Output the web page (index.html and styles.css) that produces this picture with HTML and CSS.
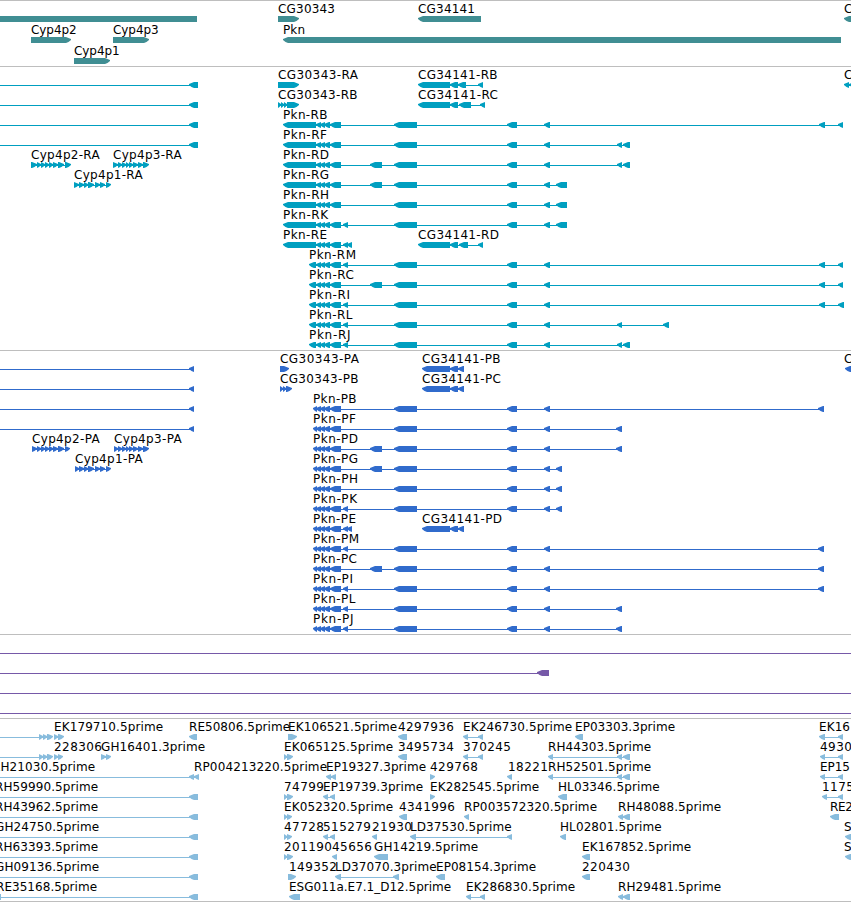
FILE: index.html
```
<!DOCTYPE html>
<html lang="en">

<head>
	<meta charset="utf-8">
	<title>Genome browser tracks</title>
	<link rel="stylesheet" href="styles.css">
</head>

<body>
	<main class="browser">
		<section class="track genes"><svg id="Genes"></svg></section>
		<section class="track transcripts"><svg id="Transcripts"></svg></section>
		<section class="track proteins"><svg id="Proteins"></svg></section>
		<section class="track insertions"><svg id="Insertions"></svg></section>
		<section class="track ests"><svg id="Ests"></svg></section>
	</main>
	<script src="tracks.js"></script>
</body>

</html>
```
FILE: styles.css
```
* {
	box-sizing: border-box;
}

body {
	margin: 0;
	background-color: #fff;
	overflow: hidden;
}

.browser {
	width: 851px;
	border-bottom: 1px solid #bebebe;
}

.track {
	border-top: 1px solid #bebebe;
}

.track svg {
	display: block;
	width: 100%;
	height: 100%;
	fill: currentColor;
	overflow: hidden;
}

.track text {
	font: 12px "DejaVu Sans", sans-serif;
	fill: #000;
}

.genes {
	height: 66px;
	color: #408e93;
}

.transcripts {
	height: 284px;
	color: #009fc0;
}

.proteins {
	height: 284px;
	color: #306bcc;
}

.insertions {
	height: 84px;
	color: #7659a8;
}

.ests {
	height: 183px;
	color: #88bcdd;
}
```
FILE: tracks.js
```
const SVG = "http://www.w3.org/2000/svg";

// pixel advance of each character, everything else is 8
const ADVANCE = {
	".": 4, "-": 7, "_": 6, i: 3.5, r: 5, m: 11, e: 7, a: 7, y: 6.5, p: 7.6,
	E: 7, P: 7, S: 7, L: 6.5, B: 7.5, F: 7, I: 4, J: 4.5, G: 9, H: 9, D: 9, M: 10, k: 7
};

// shared pieces of the Pkn gene
const SMALL = "316:321 320:325 324:330 330:341";
const TAIL = "394:417 507:517 544:550";
const MID = "370:382 " + TAIL;

// row, label, label x, direction, exons
const genes = [
	[0, "", 0, "", "-9:197"],
	[0, "CG30343", 278, ">", "278:299"],
	[0, "CG34141", 418, "<", "418:481"],
	[0, "C", 844, "<", "844:870"],
	[1, "Cyp4p2", 31, ">", "31:71"],
	[1, "Cyp4p3", 113, ">", "113:149"],
	[1, "Pkn", 283, "<", "283:841"],
	[2, "Cyp4p1", 74, ">", "74:110"]
];

const transcripts = [
	[0, "", 0, "<", "-9:-2 189:198"],
	[1, "", 0, "<", "-9:-2 189:198"],
	[2, "", 0, "<", "-9:-2 189:198"],
	[3, "", 0, "<", "-9:-2 189:198"],
	[4, "Cyp4p2-RA", 31, ">", "31:37 37:41 41:45 45:49 49:53 53:58 58:64 65:71"],
	[4, "Cyp4p3-RA", 113, ">", "113:118 118:122 122:126 126:129 129:133 133:138 138:143 143:149"],
	[5, "Cyp4p1-RA", 74, ">", "74:79 79:84 84:88 88:94 95:100 100:105 106:111"],
	[0, "CG30343-RA", 278, ">", "278:299"],
	[1, "CG30343-RB", 278, ">", "278:281 281:284 284:287 287:299"],
	[0, "CG34141-RB", 418, "<", "418:450 450:458 458:466 478:483"],
	[1, "CG34141-RC", 418, "<", "418:450 450:458 459:471 480:485"],
	[8, "CG34141-RD", 418, "<", "418:450 450:458 459:468 478:483"],
	[0, "C", 844, "<", "844:849 849:860"],
	[2, "Pkn-RB", 283, "<", `283:316 ${SMALL} ${TAIL} 819:825 838:843`],
	[3, "Pkn-RF", 283, "<", `283:316 ${SMALL} ${TAIL} 617:622 623:630`],
	[4, "Pkn-RD", 283, "<", `283:316 ${SMALL} ${MID} 617:622 623:630`],
	[5, "Pkn-RG", 283, "<", `283:316 ${SMALL} ${MID} 556:567`],
	[6, "Pkn-RH", 283, "<", `283:316 ${SMALL} ${TAIL} 556:567`],
	[7, "Pkn-RK", 283, "<", `283:316 ${SMALL} 343:348 ${TAIL} 556:567`],
	[8, "Pkn-RE", 283, "<", `283:316 ${SMALL} 343:348 347:352`],
	[9, "Pkn-RM", 309, "<", `309:316 ${SMALL} 343:348 ${TAIL} 819:825 838:843`],
	[10, "Pkn-RC", 309, "<", `309:316 ${SMALL} ${MID} 819:825 838:843`],
	[11, "Pkn-RI", 309, "<", `309:316 ${SMALL} 343:348 ${TAIL} 819:825 838:844`],
	[12, "Pkn-RL", 309, "<", `309:316 ${SMALL} 343:348 ${TAIL} 617:622 663:669`],
	[13, "Pkn-RJ", 309, "<", `309:316 ${SMALL} 343:348 ${TAIL} 617:622 623:630`]
];

const proteins = [
	[0, "", 0, "<", "-9:-2 189:194"],
	[1, "", 0, "<", "-9:-2 189:194"],
	[2, "", 0, "<", "-9:-2 189:194"],
	[3, "", 0, "<", "-9:-2 189:194"],
	[4, "Cyp4p2-PA", 32, ">", "32:37 37:41 41:45 45:49 49:53 53:58 58:64 65:70"],
	[4, "Cyp4p3-PA", 114, ">", "114:118 118:122 122:126 126:129 129:133 133:138 138:143 143:149"],
	[5, "Cyp4p1-PA", 75, ">", "75:79 79:84 84:88 88:94 95:100 100:105 106:111"],
	[0, "CG30343-PA", 280, ">", "280:289"],
	[1, "CG30343-PB", 280, ">", "280:283 283:286 286:292"],
	[0, "CG34141-PB", 422, "<", "422:450 450:458 458:464"],
	[1, "CG34141-PC", 422, "<", "422:450 450:458 458:464"],
	[8, "CG34141-PD", 422, "<", "422:450 450:458 458:464"],
	[0, "C", 844, "<", "845:851"],
	[2, "Pkn-PB", 313, "<", `313:317 ${SMALL} ${TAIL} 818:824`],
	[3, "Pkn-PF", 313, "<", `313:317 ${SMALL} ${TAIL} 616:622`],
	[4, "Pkn-PD", 313, "<", `313:317 ${SMALL} ${MID} 616:622`],
	[5, "Pkn-PG", 313, "<", `313:317 ${SMALL} ${MID} 556:562`],
	[6, "Pkn-PH", 313, "<", `313:317 ${SMALL} ${TAIL} 556:562`],
	[7, "Pkn-PK", 313, "<", `313:317 ${SMALL} 343:348 ${TAIL} 556:562`],
	[8, "Pkn-PE", 313, "<", `313:317 ${SMALL} 343:348 347:352`],
	[9, "Pkn-PM", 313, "<", `313:317 ${SMALL} 343:348 ${TAIL} 818:824`],
	[10, "Pkn-PC", 313, "<", `313:317 ${SMALL} ${MID} 818:824`],
	[11, "Pkn-PI", 313, "<", `313:317 ${SMALL} 343:348 ${TAIL} 818:824`],
	[12, "Pkn-PL", 313, "<", `313:317 ${SMALL} 343:348 ${TAIL} 616:622`],
	[13, "Pkn-PJ", 313, "<", `313:317 ${SMALL} 343:348 ${TAIL} 616:622`]
];

const insertions = [
	[0, "", 0, "<", "-9:-2 860:870"],
	[1, "", 0, "<", "-9:-2 537:549"],
	[2, "", 0, "<", "-9:-2 860:870"],
	[3, "", 0, "<", "-9:-2 860:870"]
];

const ests = [
	[0, "", 0, ">", "-9:-2 39:43 43:47 47:53"],
	[0, "EK179710.5prime", 54, ">", "54:58 58:64"],
	[0, "RE50806.5prime", 189, "<", "189:197"],
	[0, "EK106521.5prime", 288, ">", "288:297"],
	[0, "4297936", 398, "<", "398:407"],
	[0, "EK246730.5prime", 463, "<", "463:468 478:483"],
	[0, "EP03303.3prime", 575, "<", "575:583"],
	[0, "EK16", 819, "<", "819:825 838:843"],

	[1, "", 0, ">", "-9:-2 39:43 43:47 47:53"],
	[1, "228306", 54, ">", "54:58 58:63"],
	[1, "GH16401.3prime", 101, ">", "101:106 106:111"],
	[1, "EK065125.5prime", 284, ">", "284:287 287:293"],
	[1, "3495734", 398, "<", "398:407"],
	[1, "370245", 463, "<", "463:468 478:483"],
	[1, "RH44303.5prime", 548, "<", "548:553 617:622 623:630"],
	[1, "4930", 820, "<", "820:825 838:843"],

	[2, "RH21030.5prime", -8, "<", "-9:-2 189:194 194:199"],
	[2, "RP004213220.5prime", 194, "<", ""],
	[2, "EP19327.3prime", 326, "<", "326:331 331:336"],
	[2, "429768", 430, ">", "430:435"],
	[2, "18221", 508, "<", "507:512"],
	[2, "RH52501.5prime", 548, "<", "548:553 617:622 623:630"],
	[2, "EP15", 820, "<", "820:825 838:843"],

	[3, "RH59990.5prime", -5, "<", "-9:-2 189:198"],
	[3, "74799", 284, ">", "284:287 287:293"],
	[3, "EP19739.3prime", 323, "<", "323:328 330:335"],
	[3, "EK282545.5prime", 430, ">", "430:435"],
	[3, "HL03346.5prime", 558, "<", "558:567"],
	[3, "1175", 822, "<", "822:827 838:843"],

	[4, "RH43962.5prime", -5, "<", "-9:-2 189:198"],
	[4, "EK052320.5prime", 284, ">", "284:287 287:292"],
	[4, "4341996", 399, "<", "399:407"],
	[4, "RP003572320.5prime", 464, "<", "464:469"],
	[4, "RH48088.5prime", 618, "<", "618:623 623:630"],
	[4, "RE2", 830, "<", "830:839"],

	[5, "GH24750.5prime", -5, "<", "-9:-2 189:198"],
	[5, "47728", 284, ">", "284:287 287:292"],
	[5, "515279", 323, "<", "323:328 330:335"],
	[5, "21930", 372, "<", "372:377"],
	[5, "LD37530.5prime", 410, "<", "410:416 507:512"],
	[5, "HL02801.5prime", 560, "<", "560:566"],
	[5, "S", 844, "<", "845:851"],

	[6, "RH63393.5prime", -5, "<", "-9:-2 189:198"],
	[6, "201190", 284, ">", "284:287 287:293"],
	[6, "45656", 332, "<", "332:337"],
	[6, "GH14219.5prime", 374, "<", "374:388"],
	[6, "EK167852.5prime", 582, "<", "582:590"],
	[6, "S", 844, "<", "845:851"],

	[7, "GH09136.5prime", -5, "<", "-9:-2 189:198"],
	[7, "149352", 289, ">", "288:296"],
	[7, "LD37070.3prime", 335, "<", "335:341 393:399"],
	[7, "EP08154.3prime", 436, "<", "436:445"],
	[7, "220430", 582, "<", "582:590"],

	[8, "RE35168.5prime", -4, "<", "-9:1 189:198"],
	[8, "ESG011a.E7.1_D12.5prime", 289, "<", "289:300"],
	[8, "EK286830.5prime", 466, "<", "466:471 480:485"],
	[8, "RH29481.5prime", 618, "<", "618:623 623:630"]
];

// box of 6px with a rounded-off arrow head on the side it points to
function exon_path(x1, x2, y, dir) {
	const head = Math.min(5, x2 - x1);
	const mid = head / 2;
	if (dir === "<")
		return `M${x1} ${y + 2}L${x1 + mid} ${y + 1}L${x1 + head} ${y}H${x2}V${y + 6}H${x1 + head}L${x1 + mid} ${y + 5}L${x1} ${y + 3}Z`;
	if (dir === ">")
		return `M${x1} ${y}H${x2 - head}L${x2 - mid} ${y + 1}L${x2} ${y + 2}V${y + 3}L${x2 - mid} ${y + 5}L${x2 - head} ${y + 6}H${x1}Z`;
	return `M${x1} ${y}H${x2}V${y + 6}H${x1}Z`;
}

function draw_track(id, features, pitch) {
	const svg = document.getElementById(id);
	features.forEach(([row, label, x, dir, exons]) => {
		const top = row * pitch;
		if (exons) {
			const list = exons.split(" ").map(e => e.split(":").map(Number));
			const start = list[0][0];
			const end = list[list.length - 1][1];
			let d = "";
			if (list.length > 1)
				d += `M${start + 1} ${top + 18}H${end - 1}v1H${start + 1}Z`;
			const path = document.createElementNS(SVG, "path");
			path.setAttribute("d", d + list.map(e => exon_path(e[0], e[1], top + 15, dir)).join(""));
			svg.appendChild(path);
		}
		if (label) {
			const text = document.createElementNS(SVG, "text");
			text.setAttribute("x", x);
			text.setAttribute("y", top + 12);
			text.setAttribute("textLength", [...label].reduce((sum, c) => sum + (ADVANCE[c] || 8), 0));
			text.textContent = label;
			svg.appendChild(text);
		}
	});
}

draw_track("Genes", genes, 21);
draw_track("Transcripts", transcripts, 20);
draw_track("Proteins", proteins, 20);
draw_track("Insertions", insertions, 20);
draw_track("Ests", ests, 20);
```
